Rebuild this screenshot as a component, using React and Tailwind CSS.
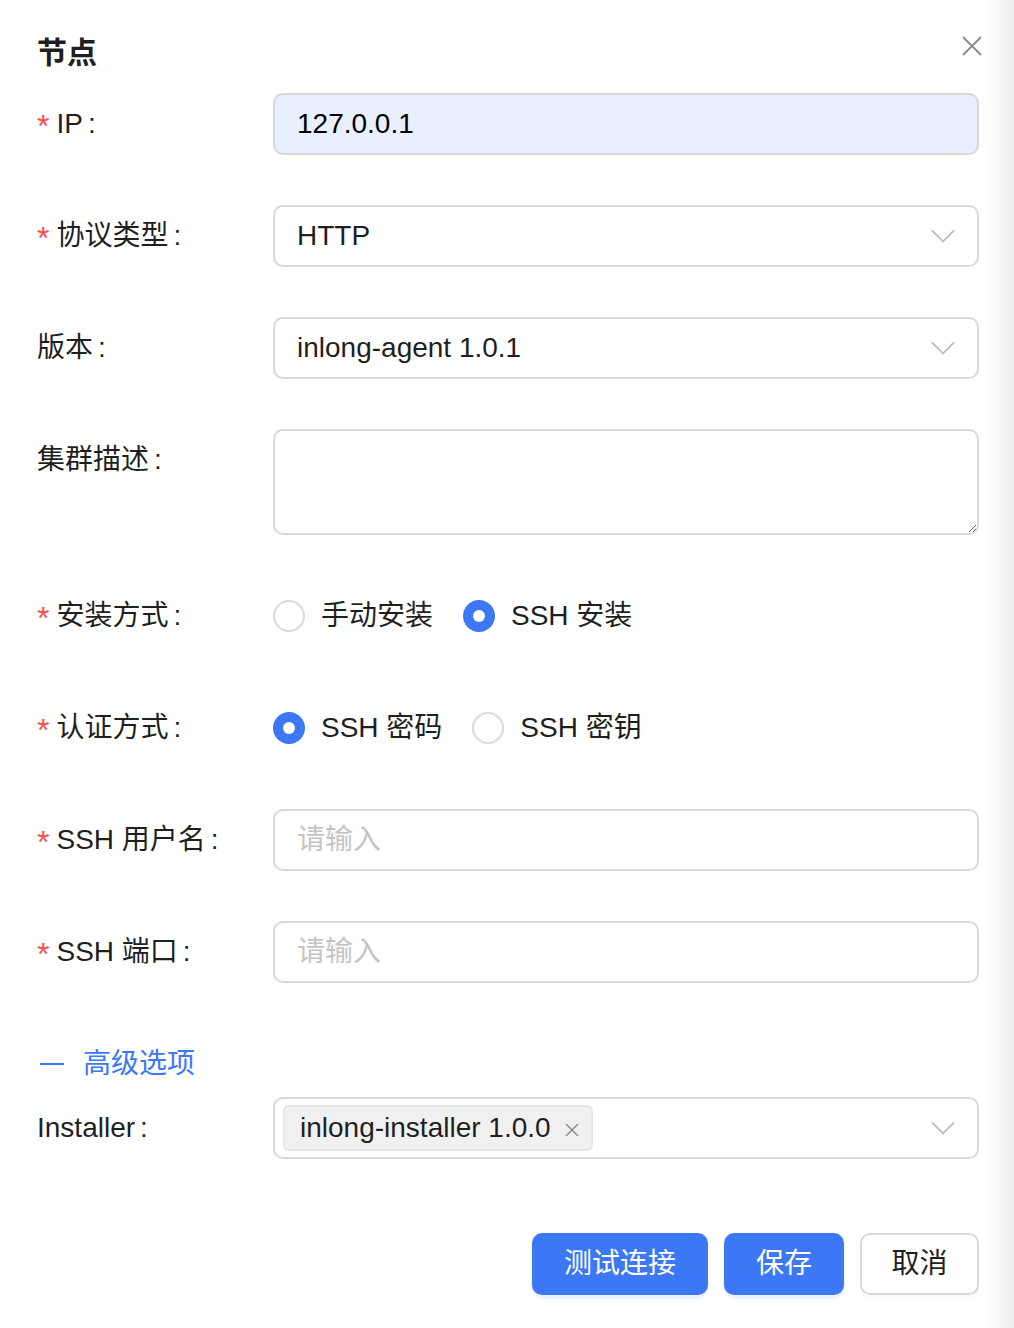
import React from 'react';

const FONT = { fontFamily: '"Liberation Sans", "Noto Sans CJK SC", sans-serif' };

function Chevron() {
  return (
    <svg width="24" height="14" viewBox="0 0 24 14" fill="none" className="shrink-0">
      <polyline points="1,1.5 12,12.5 23,1.5" stroke="#bfbfbf" strokeWidth="1.8" />
    </svg>
  );
}

function Label({ required, children }) {
  return (
    <div className="w-[236px] shrink-0 h-[62px] flex items-center text-[28px] text-[#1f1f1f]">
      {required && <span className="text-[#ff4d4f] text-[32px] leading-none mr-[7px] mt-[4px]">*</span>}
      <span>{children}</span>
      <span className="ml-[5px]">:</span>
    </div>
  );
}

function Radio({ checked, children }) {
  return (
    <label className="flex items-center mr-[30px]">
      {checked ? (
        <span className="w-[32px] h-[32px] rounded-full bg-[#3c78f6] flex items-center justify-center">
          <span className="w-[12px] h-[12px] rounded-full bg-white" />
        </span>
      ) : (
        <span className="w-[32px] h-[32px] rounded-full border-2 border-[#d9d9d9] bg-white" />
      )}
      <span className="ml-[16px] text-[28px] text-[#1f1f1f]">{children}</span>
    </label>
  );
}

export default function App() {
  return (
    <div className="flex min-h-screen bg-white" style={FONT}>
      <div className="flex-1 pl-[37px] pr-[9px] pt-[21px]">
        {/* 标题 */}
        <div className="flex items-center justify-between h-[62px] mb-[10px]">
          <h2 className="text-[30px] font-bold text-[#1f1f1f]">节点</h2>
          <svg width="20" height="20" viewBox="0 0 20 20" className="-mr-[3px] -mt-[12px]">
            <path d="M1 1L19 19M19 1L1 19" stroke="#8c8c8c" strokeWidth="2" />
          </svg>
        </div>

        {/* IP */}
        <div className="flex items-center mb-[50px]">
          <Label required>IP</Label>
          <div className="flex-1 h-[62px] rounded-[10px] border-2 border-[#d9d9d9] bg-[#e8f0fe] px-[22px] flex items-center text-[28px] text-black">
            127.0.0.1
          </div>
        </div>

        {/* 协议类型 */}
        <div className="flex items-center mb-[50px]">
          <Label required>协议类型</Label>
          <div className="flex-1 h-[62px] rounded-[10px] border-2 border-[#d9d9d9] px-[22px] flex items-center justify-between text-[28px] text-[#1f1f1f]">
            <span>HTTP</span>
            <Chevron />
          </div>
        </div>

        {/* 版本 */}
        <div className="flex items-center mb-[50px]">
          <Label>版本</Label>
          <div className="flex-1 h-[62px] rounded-[10px] border-2 border-[#d9d9d9] px-[22px] flex items-center justify-between text-[28px] text-[#1f1f1f]">
            <span>inlong-agent 1.0.1</span>
            <Chevron />
          </div>
        </div>

        {/* 集群描述 */}
        <div className="flex items-start mb-[50px]">
          <Label>集群描述</Label>
          <textarea
            className="flex-1 h-[106px] rounded-[10px] border-2 border-[#d9d9d9] px-[22px] py-[12px] text-[28px] resize-y outline-none"
          />
        </div>

        {/* 安装方式 */}
        <div className="flex items-center mb-[50px]">
          <Label required>安装方式</Label>
          <Radio>手动安装</Radio>
          <Radio checked>SSH 安装</Radio>
        </div>

        {/* 认证方式 */}
        <div className="flex items-center mb-[50px]">
          <Label required>认证方式</Label>
          <Radio checked>SSH 密码</Radio>
          <Radio>SSH 密钥</Radio>
        </div>

        {/* SSH 用户名 */}
        <div className="flex items-center mb-[50px]">
          <Label required>SSH 用户名</Label>
          <div className="flex-1 h-[62px] rounded-[10px] border-2 border-[#d9d9d9] px-[22px] flex items-center text-[28px] text-[#c4c4c4]">
            请输入
          </div>
        </div>

        {/* SSH 端口 */}
        <div className="flex items-center mb-[50px]">
          <Label required>SSH 端口</Label>
          <div className="flex-1 h-[62px] rounded-[10px] border-2 border-[#d9d9d9] px-[22px] flex items-center text-[28px] text-[#c4c4c4]">
            请输入
          </div>
        </div>

        {/* 高级选项 */}
        <div className="flex items-center h-[62px] mb-[2px] text-[28px] text-[#3c78f6]">
          <span className="w-[24px] h-[2px] bg-[#3c78f6] ml-[3px]" />
          <span className="ml-[19px]">高级选项</span>
        </div>

        {/* Installer */}
        <div className="flex items-center">
          <div className="w-[236px] shrink-0 h-[62px] flex items-center text-[28px] text-[#1f1f1f]">
            Installer<span className="ml-[5px]">:</span>
          </div>
          <div className="flex-1 h-[62px] rounded-[10px] border-2 border-[#d9d9d9] pl-[8px] pr-[22px] flex items-center justify-between">
            <span className="h-[46px] flex items-center rounded-[6px] bg-[#f0f0f0] border-2 border-[#e6e6e6] pl-[15px] pr-[12px] text-[28px] text-[#1f1f1f]">
              inlong-installer 1.0.0
              <svg width="14" height="14" viewBox="0 0 14 14" className="ml-[14px] mt-[4px]">
                <path d="M1 1L13 13M13 1L1 13" stroke="#8c8c8c" strokeWidth="1.5" />
              </svg>
            </span>
            <Chevron />
          </div>
        </div>

        {/* 按钮 */}
        <div className="flex justify-end gap-[16px] mt-[74px]">
          <button className="w-[176px] h-[62px] rounded-[10px] bg-[#3c78f6] text-white text-[28px] shadow-[0_4px_0_rgba(60,120,246,0.1)]">
            测试连接
          </button>
          <button className="w-[120px] h-[62px] rounded-[10px] bg-[#3c78f6] text-white text-[28px] shadow-[0_4px_0_rgba(60,120,246,0.1)]">
            保存
          </button>
          <button className="w-[119px] h-[62px] rounded-[10px] border-2 border-[#d9d9d9] bg-white text-[#1f1f1f] text-[28px] shadow-[0_4px_0_rgba(0,0,0,0.02)]">
            取消
          </button>
        </div>
      </div>
      <div className="w-[26px] shrink-0 bg-gradient-to-r from-white to-[#ececec]" />
    </div>
  );
}
